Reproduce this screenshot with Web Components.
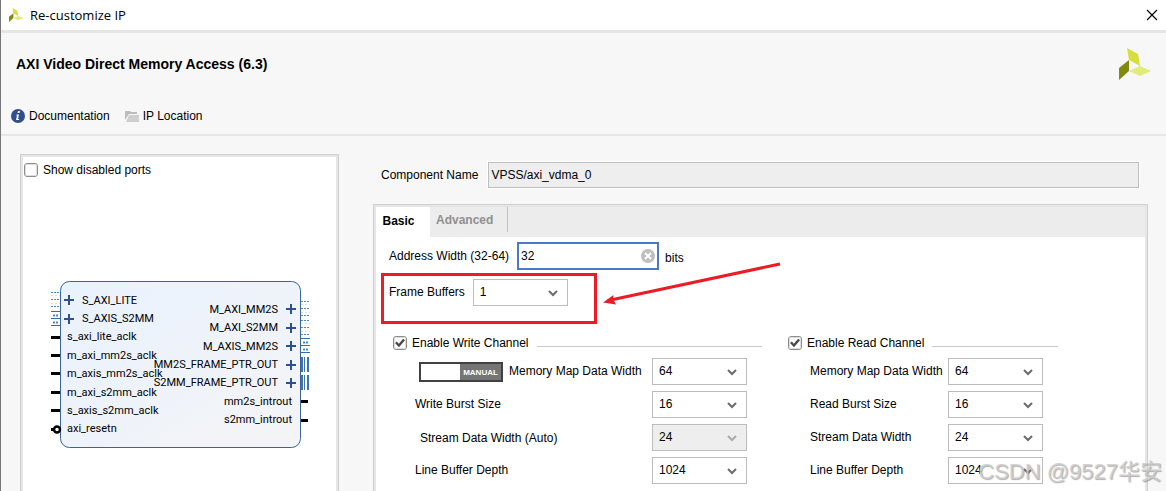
<!DOCTYPE html>
<html lang="en">
<head>
<meta charset="utf-8">
<title>Re-customize IP</title>
<style>
html, body { margin: 0; }
body { font: 12px/16px "Liberation Sans", Arial, sans-serif; color: #000; background: #f7f7f7; }
</style>
</head>
<body>
<ip-dialog></ip-dialog>
<script>
function define(name, html, setup) {
  const template = document.createElement('template');
  template.innerHTML = '<style>*,*::before{box-sizing:border-box}</style>' + html;
  customElements.define(name, class extends HTMLElement {
    connectedCallback() {
      if (this.shadowRoot) return;
      this.attachShadow({ mode: 'open' }).append(template.content.cloneNode(true));
      if (setup) setup(this, this.shadowRoot);
    }
  });
}

define('brand-mark', `
<style>:host{display:block;width:32px} svg{display:block;width:100%}</style>
<svg viewBox="0 0 32 32" aria-hidden="true">
  <path fill="#d6e03c" d="M8 0 19 6 21 18 10 12Z"/>
  <path fill="#838a0b" d="M0 20 10 12V23L0 32Z"/>
  <path fill="#e2ea78" d="M10 23 21 18 32 23 21 28Z"/>
</svg>`);

define('title-bar', `
<style>
:host{display:flex;align-items:center;height:33px;padding:0 8px;background:#fff;border-bottom:3px solid #e6e6e6;font:13px/16px "Open Sans",sans-serif}
brand-mark{width:14px;margin-right:7px}
span{flex:1}
button{border:0;background:none;padding:0;width:12px;height:12px}
svg{display:block}
</style>
<brand-mark></brand-mark><span><slot></slot></span>
<button aria-label="Close"><svg width="12" height="12" viewBox="0 0 12 12"><path d="M1 1 11 11M11 1 1 11" stroke="#000" stroke-width="1.2"/></svg></button>`);

define('ip-header', `
<style>
:host{display:block;height:103px;padding:15px 15px 0 10px;border-bottom:2px solid #e6e6e6}
.top{display:flex;justify-content:space-between;padding-left:5px;height:58px}
h1{font:bold 14px/16px "Liberation Sans",sans-serif;margin:8px 0 0}
nav{display:flex;gap:15px}
a{display:flex;align-items:center;gap:4px;color:#000;text-decoration:none}
svg{display:block}
</style>
<div class="top"><h1>AXI Video Direct Memory Access (6.3)</h1><brand-mark></brand-mark></div>
<nav>
<a href="#documentation"><svg width="14" height="20" viewBox="0 0 14 20"><circle cx="7" cy="10" r="7" fill="#304f8e"/><path fill="#fff" d="M7 5h2l-.5 2h-2zM5.500 8.500H8L7 13h1.200l-.2 1H5l1-4.500h-.8z"/></svg>Documentation</a>
<a href="#location"><svg width="14" height="20" viewBox="0 0 14 20"><path fill="#bdbdbd" d="M0 5h5l1 1h6v2H4L0 14z"/><path fill="#cfcfcf" d="M4 9h10v7H1z"/></svg>IP Location</a>
</nav>`);

const checkStyle = `
input[type=checkbox]{appearance:none;margin:0;flex:none;width:14px;height:14px;border:1px solid #8c8c8c;outline:1px solid #dedede;outline-offset:-2px;border-radius:3px;background:#fff;display:grid;place-items:center}
input:checked::before{content:"";width:10px;height:9px;background:#4a4a4a;clip-path:polygon(0 50%,18% 32%,38% 58%,82% 4%,100% 20%,40% 96%)}`;

define('check-item', `
<style>:host{display:block} label{display:flex;align-items:center;gap:5px;white-space:nowrap}${checkStyle}</style>
<label><input type="checkbox"><slot></slot></label>`,
(host, root) => { root.querySelector('input').checked = host.hasAttribute('checked'); });

const text = (x, y, s) => `<text x="${x}" y="${y}">${s}</text>`;
const plus = (x, y) => `<path d="M${x - 5} ${y}h10M${x} ${y - 5}v10" stroke="#2f5090" stroke-width="2"/>`;
const mapBus = (x, y) => `<path d="M${x} ${y}h9M${x} ${y + 7}h9M${x} ${y + 14}h9" stroke="#4c8bc4" stroke-dasharray="2 1"/><path d="M${x} ${y + 3}h9M${x} ${y + 11}h9" stroke="#cfe2f5" stroke-dasharray="2 2"/>`;
const streamBus = (x, y) => `<path d="M${x} ${y}h9M${x} ${y + 7}h9M${x} ${y + 14}h9" stroke="#2e6fae"/><path d="M${x + 2} ${y + 4}h6M${x + 2} ${y + 11}h6" stroke="#4c8bc4" stroke-width="2" stroke-dasharray="2 1"/>`;
const pointer = (x, y) => `<path d="M${x} ${y}h2v15h-2zM${x + 3} ${y}h1v15h-1zM${x + 6} ${y}h2v15h-2z" fill="#3d74aa"/>`;
const pin = (x, y, w) => `<path d="M${x} ${y}h${w}" stroke="#000" stroke-width="3"/>`;

define('block-symbol', `
<style>:host{display:block} svg{display:block;width:313px;height:180px;font:11px Roboto,sans-serif}</style>
<svg viewBox="23 275 313 180" role="img" aria-label="Block symbol">
<defs><linearGradient id="fill" x2="1" y2="1"><stop stop-color="#e9f2ff"/><stop offset="1" stop-color="#f4f4f5"/></linearGradient></defs>
${mapBus(51, 292.5)}${streamBus(51, 311.5)}
<rect x="60.5" y="281.5" width="240" height="166" rx="9" fill="url(#fill)" stroke="#3a62a5"/>
${plus(69, 300)}${plus(69, 319)}
${text(82, 304, 'S_AXI_LITE')}${text(82, 322, 'S_AXIS_S2MM')}
${['s_axi_lite_aclk', 'm_axi_mm2s_aclk', 'm_axis_mm2s_aclk', 'm_axi_s2mm_aclk', 's_axis_s2mm_aclk', 'axi_resetn']
  .map((s, i) => text(67, [340, 359, 377, 396, 414, 432][i], s) + pin(51, [337.5, 355.5, 373.5, 392.5, 410.5, 429.5][i], i < 5 ? 9 : 4)).join('')}
<circle cx="57" cy="429.500" r="3" fill="#fff" stroke="#000" stroke-width="2.500"/>
<g text-anchor="end">
${['M_AXI_MM2S', 'M_AXI_S2MM', 'M_AXIS_MM2S', 'MM2S_FRAME_PTR_OUT', 'S2MM_FRAME_PTR_OUT']
  .map((s, i) => text(278, [313, 331, 350, 368, 386][i], s) + plus(291, [309, 328, 346, 365, 383][i])).join('')}
${text(292, 405, 'mm2s_introut')}${text(292, 423, 's2mm_introut')}
</g>
${mapBus(301, 301.5)}${mapBus(301, 320.5)}${streamBus(301, 338.5)}${pointer(301, 357)}${pointer(301, 375)}
${pin(301, 401.5, 7)}${pin(301, 420.5, 7)}
</svg>`);

define('ports-panel', `
<style>
:host{display:block;background:#fff;border:1px solid #d0d0d0;border-bottom:0}
div{border:2px solid #e6e6e6;border-bottom:0;padding-top:5px;height:100%}
check-item{padding-left:1px}
block-symbol{margin-top:97px}
</style>
<div><check-item>Show disabled ports</check-item><block-symbol></block-symbol></div>`);

define('select-field', `
<style>
:host{display:flex;align-items:center;height:27px}
label{flex:1;white-space:nowrap;padding-bottom:2px}
:host([indent]) label{padding:1px 0 0 5px}
:host([inline]) label{flex:none;margin-right:8px}
.box{position:relative;width:95px;height:27px}
select{appearance:none;width:100%;height:100%;margin:0;padding:0 6px 2px;border:1px solid #bcbcbc;border-radius:0;background:#fff;color:#000;font:inherit;opacity:1}
select:disabled{background:#eee}
select:disabled + svg{opacity:.5}
svg{position:absolute;right:9px;top:10px;pointer-events:none}
</style>
<slot></slot><label for="s"></label>
<div class="box"><select id="s"></select><svg width="12" height="8" viewBox="0 0 12 8"><path d="M2 2 6 6 10 2" fill="none" stroke="#6b6b6b" stroke-width="2"/></svg></div>`,
(host, root) => {
  root.querySelector('label').textContent = host.getAttribute('label');
  const select = root.querySelector('select');
  select.add(new Option(host.getAttribute('value')));
  select.disabled = host.hasAttribute('disabled');
});

define('mode-toggle', `
<style>
:host{display:block;margin:0 6px 0 4px}
button{display:flex;width:84px;height:20px;padding:0;border:2px solid #414141;background:#fff}
span{margin-left:auto;width:41px;height:16px;background:#757575;color:#fff;font:bold 8px/17px "Liberation Sans",sans-serif;text-align:center}
</style>
<button role="switch" aria-checked="false"><span>MANUAL</span></button>`);

define('channel-group', `
<style>
:host{display:block}
header{display:flex;align-items:center;gap:8px;height:16px;margin-bottom:7px}
header::after{content:"";flex:1;height:1px;margin-top:6px;background:#c9c9c9}
.rows{display:grid;gap:6px;padding:0 15px 0 22px}
</style>
<header><slot name="title"></slot></header><div class="rows"><slot></slot></div>`);

define('width-field', `
<style>
:host{display:flex;align-items:center;height:28px}
label{margin-right:8px}
.box{position:relative;width:142px;height:28px;margin-right:6px}
input{width:100%;height:100%;border:2px solid #4a7ac8;padding:0 24px 0 2px;font:inherit;color:#000;background:#fff;outline:0;border-radius:0}
button{position:absolute;right:4px;top:7px;padding:0;border:0;background:none}
svg{display:block}
.unit{padding-top:3px}
</style>
<label for="w">Address Width (32-64)</label>
<div class="box"><input id="w" value="32"><button aria-label="Clear"><svg width="14" height="14" viewBox="0 0 14 14"><circle cx="7" cy="7" r="7" fill="#bfbfbf"/><path d="M4 4 10 10M10 4 4 10" stroke="#fff" stroke-width="2"/></svg></button></div>
<span class="unit">bits</span>`);

define('callout-mark', `
<style>
:host{display:block;position:relative}
.frame{position:absolute;left:-8px;top:-6px;width:216px;height:51px;border:3px solid #ed1c24;pointer-events:none}
svg{position:absolute;left:213px;top:-18px;pointer-events:none}
</style>
<slot></slot><div class="frame"></div>
<svg width="180" height="48" viewBox="602 261 180 48"><path d="M780 264 613 299.500" stroke="#ed1c24" stroke-width="3"/><path d="M603 302.500 613.500 295 613 299 616 304.500Z" fill="#ed1c24"/></svg>`);

define('config-tabs', `
<style>
:host{display:flex;flex-direction:column;background:#fff;border:1px solid #d0d0d0;border-bottom:0}
.inner{flex:1;border:2px solid #e6e6e6;border-bottom:0;padding-bottom:6px}
.tabs{display:flex;background:#ececec;height:30px}
button{border:0;background:none;padding:0 15px 2px 6px;font:bold 12px/16px "Liberation Sans",sans-serif;color:#909090}
button[aria-selected=true]{background:#fff;color:#000;width:54px}
button:last-child{height:25px;padding-top:3px;width:78px;border-right:1px solid #c0c0c0;text-align:left}
.form{padding:5px 12px 0 13px}
callout-mark{margin-top:9px}
.channels{display:grid;grid-template-columns:369px 270px;gap:26px;margin:29px 0 0 4px}
</style>
<div class="inner">
<div class="tabs" role="tablist"><button role="tab" aria-selected="true">Basic</button><button role="tab" aria-selected="false">Advanced</button></div>
<div class="form">
<width-field></width-field>
<callout-mark><select-field inline label="Frame Buffers" value="1"></select-field></callout-mark>
<div class="channels">
<channel-group><check-item slot="title" checked>Enable Write Channel</check-item>
<select-field label="Memory Map Data Width" value="64"><mode-toggle></mode-toggle></select-field>
<select-field label="Write Burst Size" value="16"></select-field>
<select-field indent label="Stream Data Width (Auto)" value="24" disabled></select-field>
<select-field label="Line Buffer Depth" value="1024"></select-field></channel-group>
<channel-group><check-item slot="title" checked>Enable Read Channel</check-item>
<select-field label="Memory Map Data Width" value="64"></select-field>
<select-field label="Read Burst Size" value="16"></select-field>
<select-field label="Stream Data Width" value="24"></select-field>
<select-field label="Line Buffer Depth" value="1024"></select-field></channel-group>
</div></div></div>`);

define('config-pane', `
<style>
:host{display:flex;flex-direction:column}
.name{display:flex;align-items:center;gap:10px;padding:0 9px 0 8px;margin:8px 0 16px}
input{flex:1;min-width:0;height:26px;border:1px solid #bebebe;border-radius:0;background:#eee;padding:0 2px;font:inherit;color:#000;outline:1px solid #fff}
config-tabs{flex:1}
</style>
<div class="name"><label for="n">Component Name</label><input id="n" readonly value="VPSS/axi_vdma_0"></div>
<config-tabs></config-tabs>`);

define('ip-dialog', `
<style>
:host{display:flex;flex-direction:column;min-height:100vh;border-left:1px solid #777;box-sizing:border-box;position:relative}
main{flex:1;display:flex;gap:34px;padding:18px 18px 0 19px}
ports-panel{flex:none;width:319px}
config-pane{flex:1}
.mark{position:absolute;right:4px;bottom:2px;font:22px/34px "Liberation Sans","Noto Sans CJK SC",sans-serif;color:rgba(205,205,205,.85);text-shadow:1px 1px 1px rgba(120,120,120,.6);pointer-events:none;white-space:nowrap}
</style>
<title-bar>Re-customize IP</title-bar>
<ip-header></ip-header>
<main><ports-panel></ports-panel><config-pane></config-pane></main>
<div class="mark">CSDN @9527华安</div>`);
</script>
</body>
</html>
